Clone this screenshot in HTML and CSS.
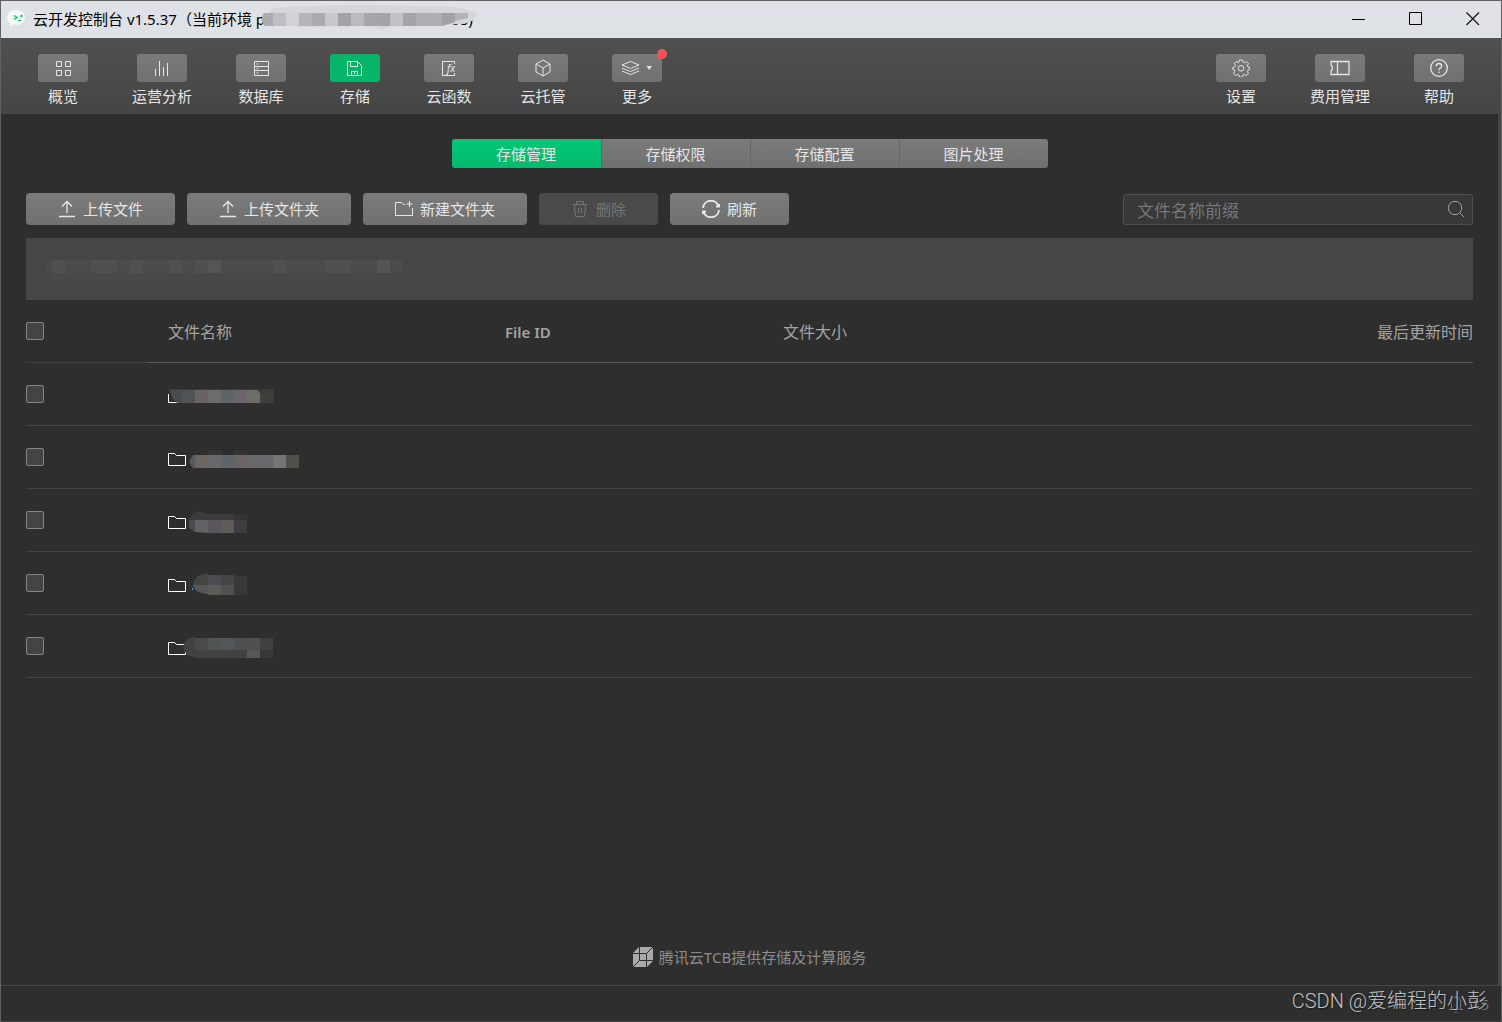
FILE: index.html
```html
<!DOCTYPE html>
<html lang="zh-CN">
<head>
<meta charset="utf-8">
<title>云开发控制台</title>
<link rel="stylesheet" href="styles.css">
</head>
<body>
<div class="window">
  <header class="titlebar">
    <svg class="app-icon" width="20" height="20" viewBox="0 0 20 20"><path d="M9.500 1C4.500 1 1 4 1 8.500c0 2.500 1 4.500 2.700 5.900L4 18l3.500-2c6.500.8 11.500-2 11.500-7.500C19 4 15 1 9.500 1z" fill="#f6f7f7" stroke="#e9ebed"/><path d="M8 6.500l3 2-3 2" fill="none" stroke="#15b868" stroke-width="1.500"/><path d="M12 11.500h3" stroke="#15b868" stroke-width="1.200"/><circle cx="15.500" cy="7" r="1.200" fill="#15b868"/></svg>
    <h1 class="title">云开发控制台 v1.5.37（当前环境 p<span class="masked"></span>08)
      <svg class="title-mask" width="217" height="26" viewBox="0 0 217 26"><path d="M12 3q70-5 180-1q24 3 24 8q-1 7-14 9l-75 3q-5 5-10 1l-10-2-60 1-45-2z" fill="#d3d6da"/><path d="M4 8h9v13H5q-6-6-1-13z" fill="#a9abae"/><path d="M13 8h13v13H13z" fill="#bdbfc3"/><path d="M26 8h13v13H26z" fill="#d0d2d6"/><path d="M39 8h13v13H39z" fill="#b3b5b9"/><path d="M52 8h13v13H52z" fill="#a9abae"/><path d="M65 8h13v13H65z" fill="#c6c8cc"/><path d="M78 8h13v13H78z" fill="#a2a3a6"/><path d="M91 8h13v13H91z" fill="#b9bbbe"/><path d="M104 8h13v13h-13z" fill="#a6a7ab"/><path d="M117 8h13v13h-13z" fill="#a3a4a7"/><path d="M130 8h13v13h-13z" fill="#c0c2c6"/><path d="M143 8h13v13h-13z" fill="#a3a5a8"/><path d="M156 8h13v13h-13z" fill="#adafb2"/><path d="M169 8h13v13h-13z" fill="#acaeb1"/><path d="M182 8h13v9l-13 4z" fill="#a0a2a5"/><path d="M195 8h13v5l-13 3z" fill="#b1b3b6"/></svg>
    </h1>
    <div class="window-controls">
      <button type="button" aria-label="最小化"><svg width="14" height="14"><path d="M0 7.500h13" stroke="#000"/></svg></button>
      <button type="button" aria-label="最大化"><svg width="14" height="14"><path d="M.5.5h12v12H.5z" fill="none" stroke="#000"/></svg></button>
      <button type="button" aria-label="关闭"><svg width="14" height="14"><path d="M.5.5l12.500 12.500M13 .5L.5 13" stroke="#111" stroke-width="1.200"/></svg></button>
    </div>
  </header>

  <nav class="toolbar">
    <div class="tool-group">
      <button type="button" class="tool"><span class="tool-icon"><svg width="18" height="18" class="line"><path d="M2.500 2.500h5v5h-5zM11.500 2.500h5v5h-5zM2.500 11.500h5v5h-5zM11.500 11.500h5v5h-5z"/></svg></span>概览</button>
      <button type="button" class="tool"><span class="tool-icon"><svg width="18" height="18" class="line"><path d="M2.500 10v7M6.500 2v15M10.500 8v9M14.500 4v13"/></svg></span>运营分析</button>
      <button type="button" class="tool"><span class="tool-icon"><svg width="18" height="18" class="line"><path d="M2.500 2.500h14v14h-14zM2.500 7.500h14M2.500 11.500h14M4.500 5h2M4.500 9.500h2M4.500 14h2"/></svg></span>数据库</button>
      <button type="button" class="tool active"><span class="tool-icon"><svg width="18" height="18" class="line"><path d="M1.500 2.500h10l4 4v10h-14zM4.500 2.500v5h7v-5M5.500 16.500v-4h6v4M8.500 13v2"/></svg></span>存储</button>
      <button type="button" class="tool"><span class="tool-icon"><svg width="18" height="18" class="line"><path d="M14.500 5V2.500h-12v14h12V14"/><text x="7" y="13" class="fx">fx</text></svg></span>云函数</button>
      <button type="button" class="tool"><span class="tool-icon"><svg width="18" height="18" class="line"><path d="M9 1l7 4v8l-7 4-7-4V5zM2 5l7 4 7-4M9 9v8"/></svg></span>云托管</button>
      <button type="button" class="tool more"><span class="tool-icon"><svg width="32" height="18" class="line"><path d="M9.500 2.500l8.500 3.500-8.500 3.500L1 6zM1 9l8.500 3.500L18 9M1 12l8.500 3.500L18 12"/><path d="M25.500 7h5.500l-2.750 4z" class="solid"/></svg></span>更多<i class="dot"></i></button>
    </div>
    <div class="tool-group">
      <button type="button" class="tool"><span class="tool-icon"><svg width="18" height="18" class="line"><path d="M7.500 1h3l.5 2 1.500.6 1.900-1 2 2-1 1.900.6 1.500 2 .5v2l-2 .6-.6 1.500 1 1.900-2 2-1.900-1-1.500.6-.5 2h-3l-.5-2-1.500-.6-1.900 1-2-2 1-1.900L2.500 11 .8 10.500v-2l2-.6.6-1.500-1-1.900 2-2 1.900 1L7 3z"/><circle cx="9" cy="9.300" r="2.800"/></svg></span>设置</button>
      <button type="button" class="tool"><span class="tool-icon"><svg width="20" height="18" class="line"><path d="M1 2.500h18v13H1V12Q4 9 1 6zM7.500 2.500v13" stroke-width="1.300"/></svg></span>费用管理</button>
      <button type="button" class="tool"><span class="tool-icon"><svg width="18" height="18" class="line"><circle cx="9" cy="9" r="8.300" stroke-width="1.300"/><path d="M6.300 7.200c0-3.700 5.400-3.500 5.400-.2 0 2-2.700 2.100-2.700 4.200M9 12.500V14" stroke-width="1.300"/></svg></span>帮助</button>
    </div>
  </nav>

  <main class="content">
    <div class="tabs" role="tablist">
      <button type="button" role="tab" aria-selected="true" class="tab selected">存储管理</button>
      <button type="button" role="tab" class="tab">存储权限</button>
      <button type="button" role="tab" class="tab">存储配置</button>
      <button type="button" role="tab" class="tab">图片处理</button>
    </div>

    <div class="actions">
      <button type="button" class="action"><svg width="18" height="18" class="line"><path d="M1 16.500h16M9 13V2M4 6.500L9 1.500l5 5" stroke-width="1.300"/></svg>上传文件</button>
      <button type="button" class="action"><svg width="18" height="18" class="line"><path d="M1 16.500h16M9 13V2M4 6.500L9 1.500l5 5" stroke-width="1.300"/></svg>上传文件夹</button>
      <button type="button" class="action"><svg width="18" height="18" class="line"><path d="M10 4.500H8.500l-2-2h-6v13h17V8M14.500 1v6M11.500 4h6"/></svg>新建文件夹</button>
      <button type="button" class="action" disabled><svg width="18" height="18" class="line"><path d="M2 4.500h14M5.500 4.500v-3h7v3M3.500 4.500l1 12h9l1-12M7.500 8v5M10.500 8v5"/></svg>删除</button>
      <button type="button" class="action"><svg width="18" height="18" class="line bold"><path d="M1 8a8 8 0 0 1 15.600-1.600M17 10a8 8 0 0 1-15.600 1.600M14 6.500h3.500V4M4 11.500H.5V14"/></svg>刷新</button>
      <label class="search">
        <input type="search" placeholder="文件名称前缀" aria-label="文件名称前缀">
        <svg width="18" height="18" class="line"><circle cx="8" cy="8" r="6.700"/><path d="M13 13l4 4"/></svg>
      </label>
    </div>

    <div class="notice">
      <svg width="360" height="20"><path d="M9 0h351v13H9Q-4 10 9 0z" fill="#4b4b4b"/><path d="M40 13h312v7H40z" fill="#484848"/><path d="M9 13h104v7H9z" fill="#494949"/><g fill="#505050"><path d="M9 0h13v13H9zM48 0h26v13H48zM87 0h13v13H87zM126 0h13v13h-13zM152 0h13v13h-13zM230 0h13v13h-13zM282 0h26v13h-26z"/></g><path d="M165 0h13v13h-13zM334 0h13v13h-13z" fill="#555"/></svg>
    </div>

    <table class="files">
      <thead>
        <tr><th class="check"><input type="checkbox" aria-label="全选"></th><th class="name">文件名称</th><th class="id">File ID</th><th class="size">文件大小</th><th class="time">最后更新时间</th></tr>
      </thead>
      <tbody>
        <tr><td><input type="checkbox" aria-label="选择文件夹 1"></td><td class="name"><svg width="140" height="24"><path d="M.5 9v8.500h17" class="folder"/><path d="M0 4h106v14H14Q4 19 3 10z" fill="#3a3a3a"/><path d="M2 5h12v13Q4 17 2 5z" fill="#4c4c4c"/><path d="M14 5h13v13H14z" fill="#515457"/><path d="M27 5h13v13H27z" fill="#696463"/><path d="M40 5h13v13H40z" fill="#6c6c6c"/><path d="M53 5h13v13H53z" fill="#5e6569"/><path d="M66 5h13v13H66z" fill="#6b656b"/><path d="M79 5h10l3 3v10H79z" fill="#6d6d69"/><path d="M92 8h13v10H92z" fill="#403f3d"/></svg></td><td></td><td></td><td></td></tr>
        <tr><td><input type="checkbox" aria-label="选择文件夹 2"></td><td class="name"><svg width="140" height="24"><path d="M.5 5.500h6l2 2h9v10H.5z" class="folder"/><path d="M40 2h13v5H40zM66 2h13v5H66z" fill="#353535"/><path d="M25 7h2v13h-2q-7-6 0-13z" fill="#57595c"/><path d="M27 7h13v13H27z" fill="#6a6463"/><path d="M40 7h13v13H40z" fill="#68686b"/><path d="M53 7h13v13H53z" fill="#5e6569"/><path d="M66 7h13v13H66z" fill="#6a6564"/><path d="M79 7h26v13H79z" fill="#68686a"/><path d="M105 7h13v13h-13z" fill="#757575"/><path d="M118 7h13v13h-13z" fill="#51514b"/></svg></td><td></td><td></td><td></td></tr>
        <tr><td><input type="checkbox" aria-label="选择文件夹 3"></td><td class="name"><svg width="140" height="24"><path d="M.5 5.500h6l2 2h9v10H.5z" class="folder"/><path d="M21 9q6-14 17-6h28v6z" fill="#3b3b3c"/><path d="M66 3h13v6H66z" fill="#333"/><path d="M21 9h6v12q-8-3-6-12z" fill="#4b4b4d"/><path d="M27 9h13v13l-13-1z" fill="#626265"/><path d="M40 9h13v13H40z" fill="#58565c"/><path d="M53 9h13v13H53z" fill="#5d5c59"/><path d="M66 9h13v13H66z" fill="#3f3d3f"/></svg></td><td></td><td></td><td></td></tr>
        <tr><td><input type="checkbox" aria-label="选择文件夹 4"></td><td class="name"><svg width="140" height="24"><path d="M.5 5.500h6l2 2h9v10H.5z" class="folder"/><path d="M24 14h1v2h-1z" fill="#4aa8e8"/><path d="M25 11q2-12 15-11v11z" fill="#444"/><path d="M40 1h13v10H40z" fill="#4b4c50"/><path d="M53 1h13v10H53z" fill="#444547"/><path d="M25 11h15v9q-14-1-15-9z" fill="#55565b"/><path d="M40 11h13v10H40z" fill="#5a5c58"/><path d="M53 11h13v10H53z" fill="#505050"/><path d="M66 2h13v19H66z" fill="#393937"/></svg></td><td></td><td></td><td></td></tr>
        <tr><td><input type="checkbox" aria-label="选择文件夹 5"></td><td class="name"><svg width="140" height="24"><path d="M.5 5.500h6l2 2h9v10H.5z" class="folder"/><path d="M27 0v20q-10 0-12-10 1-9 12-10z" fill="#424243"/><path d="M27 1h13v12H27z" fill="#4b4a49"/><path d="M40 1h13v12H40z" fill="#525454"/><path d="M53 1h13v12H53z" fill="#54575a"/><path d="M66 1h13v12H66z" fill="#4f4f4f"/><path d="M79 1h13v12H79z" fill="#50504c"/><path d="M92 1h13v12H92z" fill="#42403f"/><path d="M27 13h52v8H27z" fill="#414241"/><path d="M79 13h13v8H79z" fill="#575755"/><path d="M92 13h13v8H92z" fill="#383735"/></svg></td><td></td><td></td><td></td></tr>
      </tbody>
    </table>

    <footer class="provider">
      <svg width="20" height="20"><path d="M6 0h14v14l-6 6H0V6z" fill="#a9a9a9"/><path d="M0 6.500h13.500V20M6.500 0v13.500H20M0 20l6.500-6.500M20 0l-6.500 6.500" stroke="#2e2e2e" fill="none"/></svg>
      腾讯云TCB提供存储及计算服务
    </footer>
  </main>

  <div class="statusbar">
    <svg width="16" height="18" class="line"><path d="M1 14.500h14M3.500 14V7q0-5 4.500-5t4.500 5v7M6.500 17h3"/></svg>
    <span class="count">15</span>
    <span class="watermark">CSDN @爱编程的小彭</span>
  </div>
</div>
</body>
</html>
```
FILE: styles.css
```css
* {
  box-sizing: border-box;
}

body {
  margin: 0;
  background: #2e2e2e;
  color: #e6e6e6;
  font: 15px/20px "Noto Sans", "Noto Sans CJK SC", sans-serif;
}

button {
  padding: 0;
  border: 0;
  background: none;
  color: inherit;
  font: inherit;
}

svg {
  display: block;
  flex: none;
}

.line {
  fill: none;
  stroke: currentColor;
}

.bold {
  stroke-width: 2;
}

.solid {
  fill: currentColor;
  stroke: none;
}

.fx {
  fill: currentColor;
  stroke: none;
  font: italic 10px "Noto Sans", sans-serif;
}

.window {
  display: flex;
  flex-direction: column;
  min-height: 100vh;
  border: 1px solid #626262;
  border-bottom-color: #484446;
}

.titlebar {
  display: flex;
  align-items: center;
  height: 37px;
  padding: 0 0 2px 5px;
  background: #dee1e6;
  color: #000;
}

.title {
  position: relative;
  margin: 0 0 0 7px;
  font: inherit;
  white-space: nowrap;
}

.masked {
  display: inline-block;
  width: 186px;
}

.title-mask {
  position: absolute;
  right: -4px;
  top: -4px;
}

.window-controls {
  display: flex;
  margin-left: auto;
}

.window-controls button {
  display: grid;
  place-items: center;
  width: 57px;
  height: 35px;
}

.toolbar {
  display: flex;
  justify-content: space-between;
  height: 76px;
  padding: 16px 37px 0;
  background: linear-gradient(#505050, #454545);
}

.tool-group {
  display: flex;
  gap: 44px;
}

.tool {
  position: relative;
  display: flex;
  flex-direction: column;
  align-items: center;
  gap: 4px;
  height: 52px;
}

.tool-icon {
  display: grid;
  place-items: center;
  width: 50px;
  height: 28px;
  border-radius: 3px;
  background: linear-gradient(#7a7a7a, #707070);
}

.tool.active .tool-icon {
  background: #07b56a;
}

.dot {
  position: absolute;
  top: -5px;
  right: -5px;
  width: 10px;
  height: 10px;
  border-radius: 50%;
  background: #fa5151;
}

.content {
  flex: 1;
  display: flex;
  flex-direction: column;
  padding: 25px 25px 18px;
  border-right: 3px solid #464646;
}

.tabs {
  display: flex;
  align-self: center;
  height: 29px;
  overflow: hidden;
  border-radius: 3px;
}

.tab {
  width: 149px;
  background: linear-gradient(#7b7b7b, #707070);
}

.tab + .tab {
  border-left: 1px solid #666;
}

.tab.selected {
  background: linear-gradient(#03c777, #05ba6e);
}

.actions {
  display: flex;
  align-items: center;
  gap: 12px;
  margin-top: 25px;
}

.action {
  display: flex;
  align-items: center;
  gap: 7px;
  height: 32px;
  padding: 0 32px;
  border-radius: 4px;
  background: linear-gradient(#7b7b7b, #707070);
  white-space: nowrap;
}

.action:disabled {
  background: #4a4a4a;
  color: #757575;
}

.search {
  display: flex;
  align-items: center;
  width: 350px;
  height: 31px;
  margin-left: auto;
  padding: 0 7px 0 13px;
  border: 1px solid #505050;
  border-radius: 3px;
  background: #383838;
  color: #a0a0a0;
}

.search input {
  flex: 1;
  min-width: 0;
  padding: 3px 0 0;
  border: 0;
  outline: 0;
  background: none;
  color: #e6e6e6;
  font: inherit;
  font-size: 17px;
}

.search input::placeholder {
  color: #777;
}

.notice {
  height: 62px;
  margin-top: 13px;
  padding: 22px 17px;
  background: #464646;
}

.files {
  width: 100%;
  border-collapse: separate;
  border-spacing: 0;
  table-layout: fixed;
  color: #a3a3a3;
  font-size: 16px;
}

.files th,
.files td {
  height: 63px;
  padding: 0 0 0 22px;
  border-bottom: 1px solid #444;
  text-align: left;
  font-weight: 400;
}

.files th {
  padding-top: 2px;
  border-bottom-color: #585858;
}

.files th:first-child,
.files td:first-child {
  padding: 0;
}

.files th.check {
  width: 120px;
  border-bottom-color: #404040;
}

.files th.name {
  width: 337px;
}

.files th.id {
  width: 278px;
  font-size: 15px;
  font-weight: 600;
}

.files th.size {
  width: 278px;
}

.files th.time {
  text-align: right;
}

.files td.name {
  padding-top: 6px;
}

.files input {
  display: block;
  width: 18px;
  height: 18px;
  margin: 0;
  appearance: none;
  border: 1px solid #858585;
  border-radius: 2px;
  background: #444;
}

.folder {
  fill: none;
  stroke: #fff;
}

.provider {
  display: flex;
  justify-content: center;
  align-items: center;
  gap: 6px;
  margin-top: auto;
  color: #8c8c8c;
}

.statusbar {
  position: relative;
  display: flex;
  justify-content: flex-end;
  align-items: center;
  gap: 8px;
  height: 36px;
  padding-right: 12px;
  border-top: 1px solid #484848;
  color: #777;
}

.watermark {
  position: absolute;
  right: 14px;
  top: 2px;
  color: #c2c2c2;
  font: 20px/26px Roboto, "Noto Sans CJK SC", sans-serif;
  font-weight: 300;
  text-shadow: 1px 1px 1px #1b1b1b;
}
```
